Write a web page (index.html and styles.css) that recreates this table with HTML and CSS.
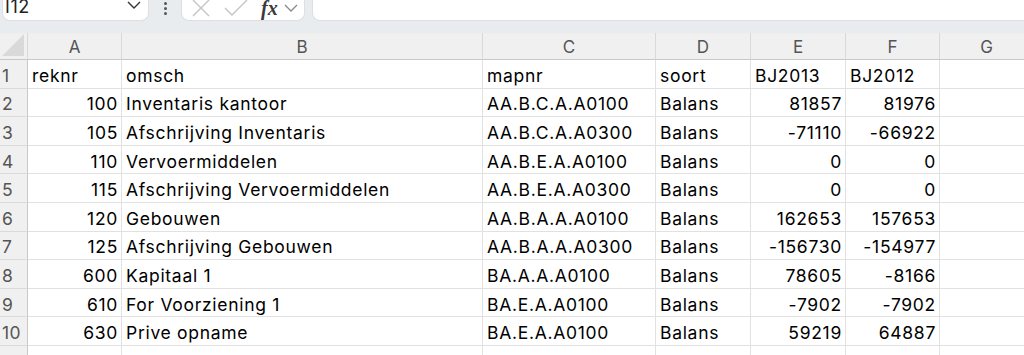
FILE: index.html
```html
<!DOCTYPE html>
<html>
<head>
<meta charset="utf-8">
<link rel="stylesheet" href="styles.css">
</head>
<body>
<div class="app">
  <div class="toolbar">
    <div class="namebox">
      <span class="ref">I12</span>
      <svg class="chev" width="14" height="8" viewBox="0 0 14 8"><path d="M1 1l6 6 6-6" fill="none" stroke="#333" stroke-width="1.4"/></svg>
    </div>
    <div class="dots"><span></span><span></span><span></span></div>
    <div class="fbtns">
      <svg class="ico" width="20" height="20" viewBox="0 0 20 20"><path d="M2 2l16 16M18 2L2 18" stroke="#c4c4c4" stroke-width="1.4"/></svg>
      <svg class="ico" width="24" height="18" viewBox="0 0 24 18"><path d="M1 9l7 7L23 1" fill="none" stroke="#c4c4c4" stroke-width="1.4"/></svg>
      <span class="fx">fx</span>
      <svg class="chev2" width="14" height="8" viewBox="0 0 14 8"><path d="M1 1l6 6 6-6" fill="none" stroke="#888" stroke-width="1.3"/></svg>
    </div>
    <div class="finput"></div>
  </div>
  <div class="sheet">
    <div class="hd corner"><svg width="22" height="22" viewBox="0 0 22 22"><path d="M22 0V22H0Z" fill="#d9d9d9"/></svg></div>
    <div class="hd">A</div><div class="hd">B</div><div class="hd">C</div><div class="hd">D</div><div class="hd">E</div><div class="hd">F</div><div class="hd">G</div>

    <div class="rh">1</div><div class="c">reknr</div><div class="c">omsch</div><div class="c">mapnr</div><div class="c">soort</div><div class="c">BJ2013</div><div class="c">BJ2012</div><div class="c"></div>
    <div class="rh">2</div><div class="c n">100</div><div class="c">Inventaris kantoor</div><div class="c">AA.B.C.A.A0100</div><div class="c">Balans</div><div class="c n">81857</div><div class="c n">81976</div><div class="c"></div>
    <div class="rh">3</div><div class="c n">105</div><div class="c">Afschrijving Inventaris</div><div class="c">AA.B.C.A.A0300</div><div class="c">Balans</div><div class="c n">-71110</div><div class="c n">-66922</div><div class="c"></div>
    <div class="rh">4</div><div class="c n">110</div><div class="c">Vervoermiddelen</div><div class="c">AA.B.E.A.A0100</div><div class="c">Balans</div><div class="c n">0</div><div class="c n">0</div><div class="c"></div>
    <div class="rh">5</div><div class="c n">115</div><div class="c">Afschrijving Vervoermiddelen</div><div class="c">AA.B.E.A.A0300</div><div class="c">Balans</div><div class="c n">0</div><div class="c n">0</div><div class="c"></div>
    <div class="rh">6</div><div class="c n">120</div><div class="c">Gebouwen</div><div class="c">AA.B.A.A.A0100</div><div class="c">Balans</div><div class="c n">162653</div><div class="c n">157653</div><div class="c"></div>
    <div class="rh">7</div><div class="c n">125</div><div class="c">Afschrijving Gebouwen</div><div class="c">AA.B.A.A.A0300</div><div class="c">Balans</div><div class="c n">-156730</div><div class="c n">-154977</div><div class="c"></div>
    <div class="rh">8</div><div class="c n">600</div><div class="c">Kapitaal 1</div><div class="c">BA.A.A.A0100</div><div class="c">Balans</div><div class="c n">78605</div><div class="c n">-8166</div><div class="c"></div>
    <div class="rh">9</div><div class="c n">610</div><div class="c">For Voorziening 1</div><div class="c">BA.E.A.A0100</div><div class="c">Balans</div><div class="c n">-7902</div><div class="c n">-7902</div><div class="c"></div>
    <div class="rh">10</div><div class="c n">630</div><div class="c">Prive opname</div><div class="c">BA.E.A.A0100</div><div class="c">Balans</div><div class="c n">59219</div><div class="c n">64887</div><div class="c"></div>
    <div class="rh"></div><div class="c"></div><div class="c"></div><div class="c"></div><div class="c"></div><div class="c"></div><div class="c"></div><div class="c"></div>
  </div>
</div>
</body>
</html>
```
FILE: styles.css
```css
html, body {
  margin: 0;
  padding: 0;
  background: #ffffff;
  overflow: hidden;
}
.app {
  width: 1024px;
  height: 355px;
  overflow: hidden;
  font-family: "Inter", "Open Sans", "Liberation Sans", sans-serif;
  color: #000;
}
.toolbar {
  height: 33px;
  background: #e9ecef;
  display: flex;
  align-items: flex-start;
  box-sizing: border-box;
}
.namebox {
  margin-left: 2px;
  margin-top: -8px;
  width: 147px;
  height: 29px;
  background: #fff;
  border: 1px solid #dcdfe3;
  border-top: none;
  border-radius: 0 0 8px 8px;
  box-sizing: border-box;
  display: flex;
  align-items: flex-end;
  justify-content: space-between;
  padding: 0 7px 3px 2px;
}
.ref {
  font-size: 18px;
  line-height: 20px;
  color: #222;
  letter-spacing: 0.6px;
}
.chev { margin-bottom: 8px; }
.dots {
  width: 32px;
  display: flex;
  flex-direction: column;
  align-items: center;
  gap: 2px;
  padding-top: 2px;
}
.dots span {
  width: 3px;
  height: 3px;
  border-radius: 50%;
  background: #555;
}
.fbtns {
  margin-top: -8px;
  width: 124px;
  height: 29px;
  background: #fff;
  border: 1px solid #dcdfe3;
  border-top: none;
  border-radius: 0 0 8px 8px;
  box-sizing: border-box;
  display: flex;
  align-items: center;
  padding: 3px 4px 0 9px;
  gap: 0;
}
.fbtns .ico:first-child { margin-right: 13px; }
.fbtns .ico { flex: none; }
.fx {
  font-family: "Liberation Serif", serif;
  font-style: italic;
  font-weight: bold;
  font-size: 20px;
  color: #3a3a3a;
  margin-left: 13px;
  margin-right: 6px;
  line-height: 18px;
}
.chev2 { margin-top: 1px; }
.finput {
  margin-top: -8px;
  margin-left: 7px;
  flex: 1;
  height: 29px;
  background: #fff;
  border: 1px solid #dcdfe3;
  border-top: none;
  border-right: none;
  border-radius: 0 0 0 8px;
  box-sizing: border-box;
}
.sheet {
  display: grid;
  grid-template-columns: 28px 94px 361px 173px 95px 95px 94px 94px;
  grid-template-rows: 27px repeat(11, 28.6px);
  width: 1034px;
}
.hd {
  background: #f0f0f0;
  border-right: 1px solid #d9d9d9;
  border-bottom: 1px solid #c8c8c8;
  box-sizing: border-box;
  display: flex;
  align-items: center;
  justify-content: center;
  font-size: 17px;
  color: #555;
  padding-top: 2px;
}
.hd.corner {
  justify-content: flex-end;
  align-items: flex-end;
  padding: 0 3px 3px 0;
}
.rh {
  background: #f0f0f0;
  border-right: 1px solid #c8c8c8;
  border-bottom: 1px solid #dadada;
  box-sizing: border-box;
  display: flex;
  align-items: center;
  padding: 3px 0 0 2px;
  font-size: 17.5px;
  color: #555;
  letter-spacing: 0.4px;
}
.c {
  border-right: 1px solid #e1e1e1;
  border-bottom: 1px solid #e1e1e1;
  box-sizing: border-box;
  display: flex;
  align-items: center;
  padding: 3px 4px 0 4px;
  font-size: 17.5px;
  letter-spacing: 0.7px;
  white-space: nowrap;
  overflow: hidden;
}
.c.n { justify-content: flex-end; padding-right: 3px; }
```
